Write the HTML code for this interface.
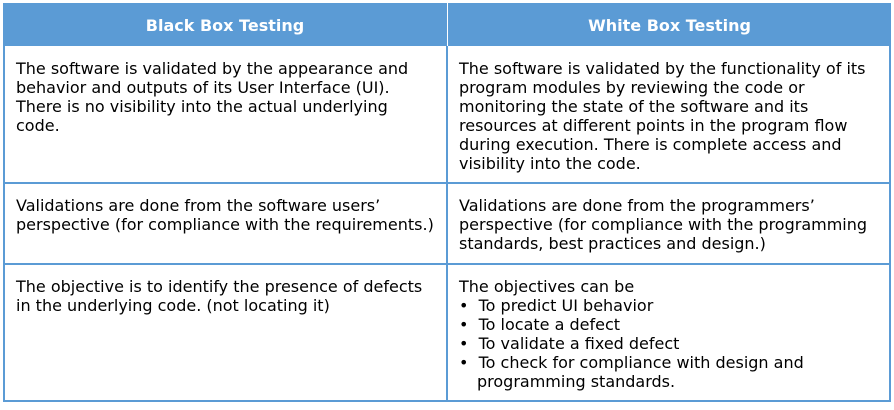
<!DOCTYPE html>
<html><head><meta charset="utf-8"><style>
body{margin:0;width:894px;height:410px;background:#fff;position:relative;overflow:hidden;font-family:"DejaVu Sans","Liberation Sans",sans-serif;color:#000}
.hd{position:absolute;top:3px;height:43px;background:#5b9bd5;}
.line{position:absolute;background:#5b9bd5}
.h{position:absolute;top:16px;color:#fff;font-weight:bold;font-size:16px;text-align:center}
.t{position:absolute;font-size:16px;line-height:19px;white-space:nowrap}
</style></head><body>
<div class="hd" style="left:3px;width:888px"></div>
<div class="line" style="left:447px;top:3px;width:1px;height:43px;background:#fff"></div>
<div class="h" style="left:3px;width:444px">Black Box Testing</div>
<div class="h" style="left:448px;width:443px">White Box Testing</div>
<div class="line" style="left:3px;top:46px;width:2px;height:356px"></div>
<div class="line" style="left:889px;top:46px;width:2px;height:356px"></div>
<div class="line" style="left:446px;top:46px;width:2px;height:356px"></div>
<div class="line" style="left:3px;top:182px;width:888px;height:2px"></div>
<div class="line" style="left:3px;top:263px;width:888px;height:2px"></div>
<div class="line" style="left:3px;top:400px;width:888px;height:2px"></div>
<div class="t" style="left:16px;top:59px">The software is validated by the appearance and<br>behavior and outputs of its User Interface (UI).<br>There is no visibility into the actual underlying<br>code.</div>
<div class="t" style="left:459px;top:59px">The software is validated by the functionality of its<br>program modules by reviewing the code or<br>monitoring the state of the software and its<br>resources at different points in the program flow<br>during execution. There is complete access and<br>visibility into the code.</div>
<div class="t" style="left:16px;top:196px">Validations are done from the software users’<br>perspective (for compliance with the requirements.)</div>
<div class="t" style="left:459px;top:196px">Validations are done from the programmers’<br>perspective (for compliance with the programming<br>standards, best practices and design.)</div>
<div class="t" style="left:16px;top:277px">The objective is to identify the presence of defects<br>in the underlying code. (not locating it)</div>
<div class="t" style="left:459px;top:277px">The objectives can be<br>•&nbsp;&nbsp;To predict UI behavior<br>•&nbsp;&nbsp;To locate a defect<br>•&nbsp;&nbsp;To validate a fixed defect<br>•&nbsp;&nbsp;To check for compliance with design and<br><span style="padding-left:18px">programming standards.</span></div>
</body></html>
